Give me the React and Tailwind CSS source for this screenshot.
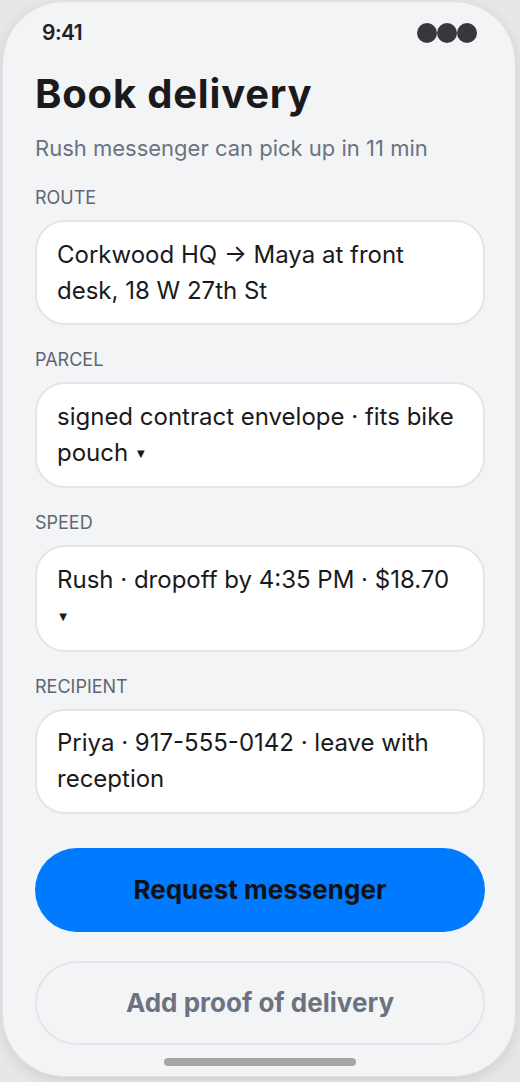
export default function App() {
  const fields = [
    { label: 'ROUTE', value: 'Corkwood HQ → Maya at front desk, 18 W 27th St' },
    { label: 'PARCEL', value: 'signed contract envelope · fits bike pouch', caret: true },
    { label: 'SPEED', value: 'Rush · dropoff by 4:35 PM · $18.70', caret: true },
    { label: 'RECIPIENT', value: 'Priya · 917-555-0142 · leave with reception' },
  ]
  return (
    <div className="w-[520px] h-[1082px] bg-[#e6e7e9] pt-px pl-[2px] font-['Inter',sans-serif]">
      <div className="w-[514px] h-[1076px] rounded-[62px] border border-[#dfe0e3] bg-[#f3f4f6] shadow-[0_4px_14px_rgba(0,0,0,0.10)] flex flex-col pl-[32px] pr-[30px] overflow-hidden">
        <div className="flex items-center justify-between h-[62px] pl-[7px] pr-[8px]">
          <span className="text-[21px] font-semibold text-[#1f2023] tracking-tight">9:41</span>
          <div className="flex">
            <span className="w-[20px] h-[20px] rounded-full bg-[#37383b]" />
            <span className="w-[20px] h-[20px] rounded-full bg-[#37383b]" />
            <span className="w-[20px] h-[20px] rounded-full bg-[#37383b]" />
          </div>
        </div>
        <h1 className="mt-[6px] text-[40px] leading-[48px] font-bold text-[#1a1a1c] tracking-[0.02em]">Book delivery</h1>
        <p className="mt-[16px] text-[22px] leading-[28px] text-[#6b7280]">Rush messenger can pick up in 11 min</p>
        <div className="flex flex-col mt-[26px]">
          {fields.map((f, i) => (
            <div key={f.label} className={i > 0 ? 'mt-[25px]' : ''}>
              <div className="text-[18px] leading-[20px] text-[#5f6673]">{f.label}</div>
              <div className="mt-[12px] rounded-[30px] border-2 border-[#e4e5e8] bg-white pl-[20px] pr-[22px] py-[14.5px] text-[24px] leading-[36px] text-[#1a1a1c]">
                {f.value}
                {f.caret && (
                  <>
                    {' '}
                    <span className="inline-block w-[12px] text-center text-[10px] align-middle font-['DejaVu_Sans',sans-serif]">▼</span>
                  </>
                )}
              </div>
            </div>
          ))}
        </div>
        <button className="mt-[34px] h-[84px] rounded-full bg-[#007aff] text-[26px] font-bold text-[#111318]">Request messenger</button>
        <button className="mt-[29px] h-[84px] rounded-full border-2 border-[#e4e5e8] text-[26px] font-bold text-[#6b7280]">Add proof of delivery</button>
        <div className="mt-[13px] mx-auto w-[192px] h-[8px] rounded-full bg-[#a6a6a8]" />
      </div>
    </div>
  )
}
